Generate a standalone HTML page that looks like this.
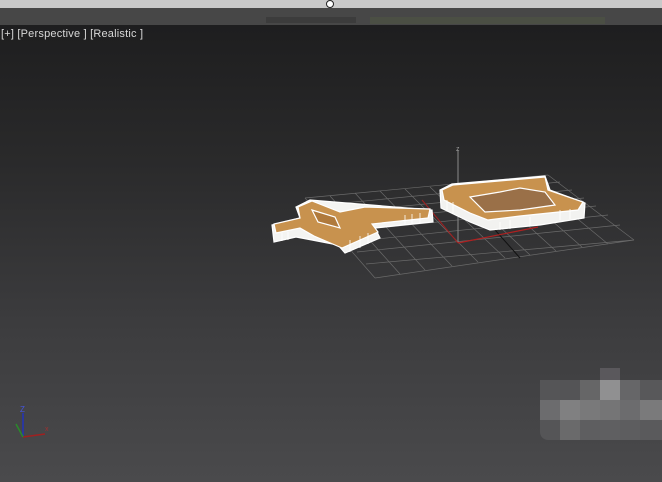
<!DOCTYPE html>
<html><head><meta charset="utf-8"><style>
html,body{margin:0;padding:0;width:662px;height:482px;overflow:hidden;background:#333}
#top{position:absolute;left:0;top:0;width:662px;height:8px;background:#c9c9c9}
#dot{position:absolute;left:326px;top:0;width:6px;height:6px;border:1px solid #222;border-radius:50%;background:#fff}
#tb{position:absolute;left:0;top:8px;width:662px;height:17px;background:#474747}
#vp{position:absolute;left:0;top:25px;width:662px;height:457px;background:linear-gradient(#1e1e1f 0%,#2a2a2b 30%,#3c3c3e 65%,#4a4a4c 100%)}
#lbl{position:absolute;left:1px;top:28px;font:11px "Liberation Sans",sans-serif;color:#d8d8d8;letter-spacing:0.2px}
.px{position:absolute;width:20px;height:20px}
</style></head><body>
<div id="top"><div id="dot"></div></div>
<div id="tb">
 <div style="position:absolute;left:266px;top:9px;width:90px;height:6px;background:#3c3c3c"></div>
 <div style="position:absolute;left:370px;top:9px;width:235px;height:7px;background:#4b4f44"></div>
</div>
<div id="vp"></div>
<div id="lbl">[+] [Perspective ] [Realistic ]</div>
<svg width="662" height="482" style="position:absolute;left:0;top:0">
 <g stroke="#6a6a6a" stroke-width="0.7" fill="none">
  <path d="M305 198 L548 175 M313 206 L560 182 M321 214 L572 190 M330 223 L584 198 M339 232 L596 206 M348 242 L608 215 M357 252 L620 225 M366 264 L634 240 M375 278 L634 240"/>
  <path d="M305 198 L375 278 M330 196 L400 274 M355 193 L425 270 M380 191 L452 266 M405 189 L478 262 M430 187 L505 258 M455 185 L530 255 M480 182 L556 251 M505 180 L582 247 M528 178 L608 244 M548 175 L634 240"/>
 </g>
 <line x1="455" y1="185" x2="520" y2="258" stroke="#111" stroke-width="1"/>
 <line x1="458" y1="150" x2="458" y2="243" stroke="#8a8a8a" stroke-width="1"/>
 <text x="456" y="151" font-family="Liberation Sans" font-size="7" fill="#999">z</text>
 <line x1="458" y1="243" x2="538" y2="227" stroke="#b02020" stroke-width="1.2"/>
 <line x1="422" y1="200" x2="458" y2="243" stroke="#a02020" stroke-width="1"/>
 <!-- left model -->
 <g stroke="#fff" stroke-width="1.2">
  <path d="M272 225 L300 218 L296 207 L310 200 L432 210 L433 222 L375 228 L380 238 L345 253 L338 245 L312 240 L296 237 L274 242 Z" fill="#f4f4f2"/>
  <path d="M274 224 L300 218 L298 207 L312 201 L340 212 L365 207 L430 209 L428 218 L372 224 L378 232 L342 248 L314 236 L300 228 L276 233 Z" fill="#c8924e"/>
  <path d="M312 210 L335 217 L340 228 L318 222 Z" fill="#b07a3c"/>
 </g>
 <g stroke="#fff" stroke-width="0.8">
  <path d="M282 233 V241 M288 232 V240 M350 240 V252 M360 236 V248 M368 233 V244 M405 215 V225 M412 214 V224 M420 213 V223"/>
 </g>
 <!-- right model -->
 <g stroke="#fff" stroke-width="1.2">
  <path d="M440 190 L452 184 L545 176 L550 190 L585 203 L584 218 L540 225 L490 230 L470 222 L441 208 Z" fill="#f2f2f0"/>
  <path d="M442 190 L453 185 L545 177 L548 190 L583 202 L578 210 L520 216 L488 220 L470 213 L444 200 Z" fill="#c8924e"/>
  <path d="M470 197 L500 192 L520 188 L545 192 L555 205 L520 210 L485 212 Z" fill="#9a7048"/>
 </g>
 <g stroke="#fff" stroke-width="0.8">
  <path d="M447 200 V210 M453 202 V213 M500 222 V230 M510 220 V229 M530 217 V226 M560 210 V220 M570 209 V219"/>
 </g>
 <!-- gizmo -->
 <line x1="23" y1="437" x2="23" y2="413" stroke="#2233bb" stroke-width="1.5"/>
 <text x="20" y="412" font-family="Liberation Sans" font-size="8" fill="#4455dd">Z</text>
 <line x1="23" y1="437" x2="45" y2="434" stroke="#a02020" stroke-width="1.5"/>
 <text x="45" y="431" font-family="Liberation Sans" font-size="7" fill="#a03030">x</text>
 <line x1="23" y1="437" x2="16" y2="424" stroke="#2a8a2a" stroke-width="1.5"/>
</svg>
<div class="px" style="left:600px;top:368px;height:12px;background:#5a585c"></div>
<div class="px" style="left:540px;top:380px;background:#555557"></div>
<div class="px" style="left:560px;top:380px;background:#545456"></div>
<div class="px" style="left:580px;top:380px;background:#666667"></div>
<div class="px" style="left:600px;top:380px;background:#909091"></div>
<div class="px" style="left:620px;top:380px;background:#666668"></div>
<div class="px" style="left:640px;top:380px;width:22px;background:#58585a"></div>
<div class="px" style="left:540px;top:400px;background:#6c6c6e"></div>
<div class="px" style="left:560px;top:400px;background:#808081"></div>
<div class="px" style="left:580px;top:400px;background:#79797a"></div>
<div class="px" style="left:600px;top:400px;background:#757576"></div>
<div class="px" style="left:620px;top:400px;background:#6c6c6e"></div>
<div class="px" style="left:640px;top:400px;width:22px;background:#7a7a7b"></div>
<div class="px" style="left:540px;top:420px;background:#555557;border-bottom-left-radius:8px"></div>
<div class="px" style="left:560px;top:420px;background:#6a6a6b"></div>
<div class="px" style="left:580px;top:420px;background:#5e5e60"></div>
<div class="px" style="left:600px;top:420px;background:#5f5f61"></div>
<div class="px" style="left:620px;top:420px;background:#5d5d5f"></div>
<div class="px" style="left:640px;top:420px;width:22px;background:#5a5a5c"></div>
</body></html>
